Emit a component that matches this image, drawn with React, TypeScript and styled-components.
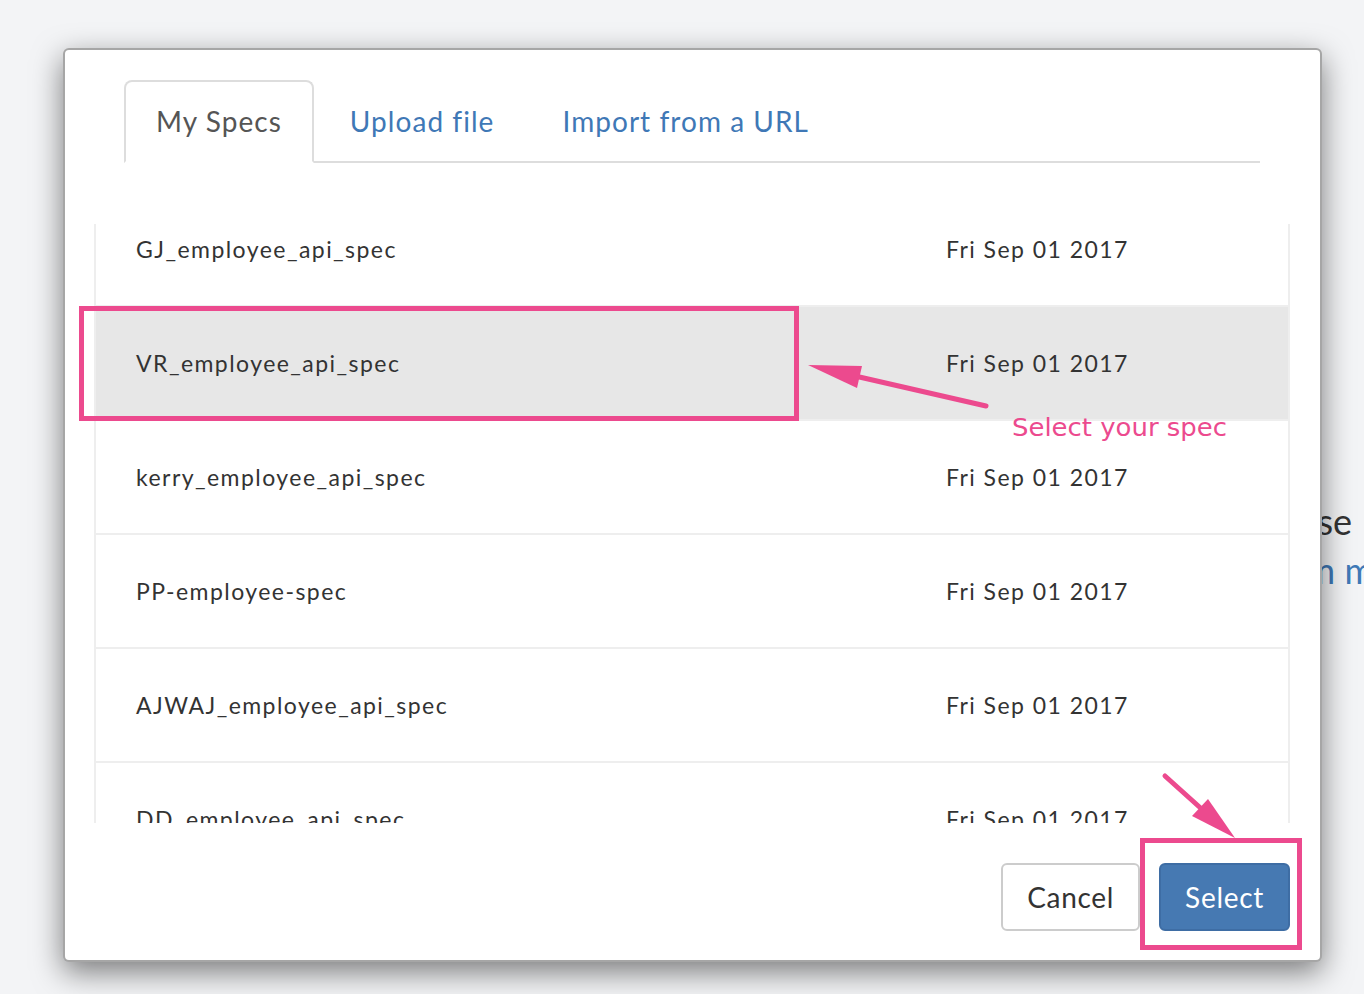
import React from "react";
import styled, { createGlobalStyle } from "styled-components";

const Global = createGlobalStyle`
  html, body { margin: 0; padding: 0; }
  body {
    background: #f3f4f6;
    font-family: Lato, "Open Sans", sans-serif;
    overflow: hidden;
  }
`;

const Page = styled.div`
  position: relative;
  width: 1364px;
  height: 994px;
  overflow: hidden;
  background: #f3f4f6;
`;

const BehindText = styled.div`
  padding-top: 497px;
  display: flex;
  flex-direction: column;
  align-items: flex-end;
  font-family: Lato, sans-serif;
  font-size: 36px;
  line-height: 49px;
`;

const BehindLine = styled.div<{ $blue?: boolean; $shift: number }>`
  color: ${(p) => (p.$blue ? "#3f79b7" : "#333")};
  margin-right: ${(p) => p.$shift}px;
  white-space: nowrap;
`;

const Modal = styled.div`
  position: absolute;
  left: 63px;
  top: 48px;
  width: 1259px;
  height: 914px;
  box-sizing: border-box;
  background: #fff;
  border: 2px solid rgba(0, 0, 0, 0.35);
  border-radius: 6px;
  box-shadow: 0 10px 30px rgba(0, 0, 0, 0.5);
  padding: 30px 30px 29px 29px;
  display: flex;
  flex-direction: column;
`;

const TabBar = styled.div`
  display: flex;
  margin: 0 30px;
  border-bottom: 2px solid #ddd;
`;

const Tab = styled.div<{ $active?: boolean }>`
  padding: 19px 30px 20px;
  margin-right: 4px;
  margin-bottom: -2px;
  font-size: 28px;
  line-height: 40px;
  letter-spacing: 1.05px;
  border: 2px solid ${(p) => (p.$active ? "#ddd" : "transparent")};
  border-bottom-color: ${(p) => (p.$active ? "#fff" : "transparent")};
  border-radius: 8px 8px 0 0;
  color: ${(p) => (p.$active ? "#555" : "#3f78b6")};
  background: ${(p) => (p.$active ? "#fff" : "transparent")};
`;

const ListViewport = styled.div`
  margin-top: 61px;
  height: 600px;
  overflow: hidden;
  border-left: 2px solid #eee;
  border-right: 2px solid #eee;
`;

const ListInner = styled.div`
  margin-top: -31px;
`;

const Row = styled.div<{ $selected?: boolean }>`
  display: grid;
  grid-template-columns: 810px 1fr;
  align-items: center;
  height: 112px;
  padding-left: 40px;
  border-bottom: 2px solid #eee;
  background: ${(p) => (p.$selected ? "#e7e7e7" : "#fff")};
  font-size: 23px;
  letter-spacing: 1.45px;
  color: #333;
`;

const Cell = styled.div`
  white-space: nowrap;
`;

const Footer = styled.div`
  display: flex;
  justify-content: flex-end;
  gap: 19px;
  margin-top: 40px;
`;

const Button = styled.button<{ $primary?: boolean }>`
  font-family: Lato, sans-serif;
  font-size: 28px;
  line-height: 40px;
  padding: 12px 24px;
  border-radius: 6px;
  border: 2px solid ${(p) => (p.$primary ? "#3e6da4" : "#ccc")};
  background: ${(p) => (p.$primary ? "#4679b2" : "#fff")};
  color: ${(p) => (p.$primary ? "#fff" : "#333")};
  letter-spacing: 0.7px;
`;

const Annotations = styled.svg`
  position: absolute;
  left: 0;
  top: 0;
  pointer-events: none;
`;

const specs = [
  "GJ_employee_api_spec",
  "VR_employee_api_spec",
  "kerry_employee_api_spec",
  "PP-employee-spec",
  "AJWAJ_employee_api_spec",
  "DD_employee_api_spec",
];

const PINK = "#ec4a8e";

export default function App() {
  return (
    <Page>
      <Global />
      <BehindText>
        <BehindLine $shift={12}>Browse</BehindLine>
        <BehindLine $blue $shift={-10}>Open from m</BehindLine>
      </BehindText>
      <Modal>
        <TabBar>
          <Tab $active>My Specs</Tab>
          <Tab>Upload file</Tab>
          <Tab>Import from a URL</Tab>
        </TabBar>
        <ListViewport>
          <ListInner>
            {specs.map((s, i) => (
              <Row key={s} $selected={i === 1}>
                <Cell>{s}</Cell>
                <Cell>Fri Sep 01 2017</Cell>
              </Row>
            ))}
          </ListInner>
        </ListViewport>
        <Footer>
          <Button>Cancel</Button>
          <Button $primary>Select</Button>
        </Footer>
      </Modal>
      <Annotations width={1364} height={994} viewBox="0 0 1364 994">
        <rect x={81.5} y={308.5} width={715} height={110} fill="none" stroke={PINK} strokeWidth={5} />
        <line x1={986} y1={406} x2={855} y2={376} stroke={PINK} strokeWidth={5} strokeLinecap="round" />
        <polygon points="808,365 862,366 857,388" fill={PINK} />
        <text
          x={1012}
          y={436}
          fill={PINK}
          fontFamily="'DejaVu Sans', Verdana, sans-serif"
          fontSize={25}
          textLength={215}
          lengthAdjust="spacingAndGlyphs"
        >
          Select your spec
        </text>
        <line x1={1165} y1={776} x2={1205} y2={812} stroke={PINK} strokeWidth={5} strokeLinecap="round" />
        <polygon points="1235,838 1208,799 1192,816" fill={PINK} />
        <rect x={1142.5} y={840.5} width={157} height={107} fill="none" stroke={PINK} strokeWidth={5} />
      </Annotations>
    </Page>
  );
}
